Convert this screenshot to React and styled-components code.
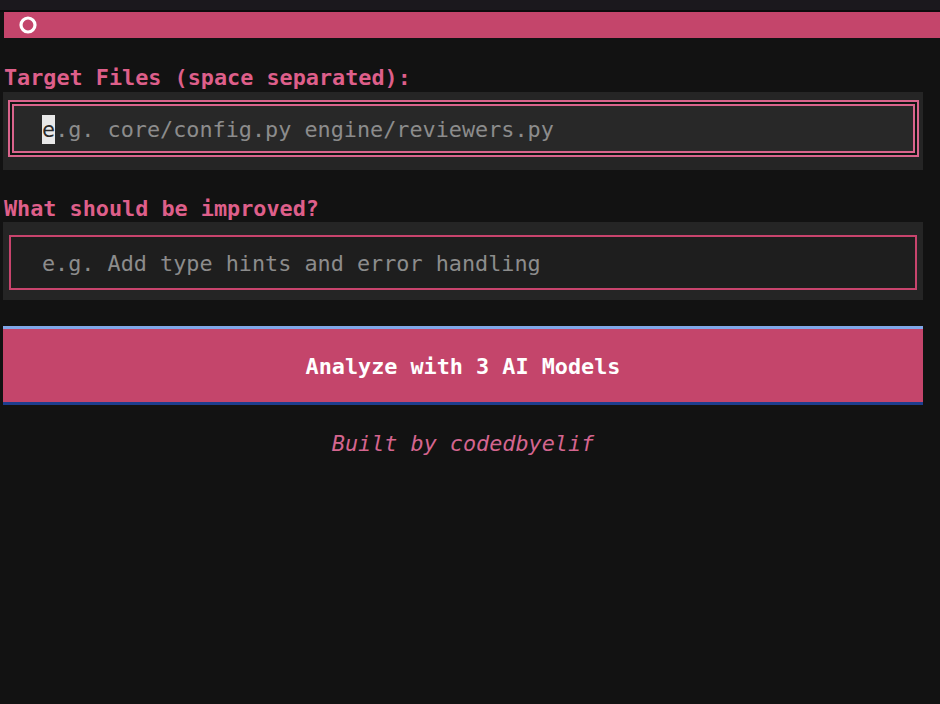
import React from "react";
import styled, { createGlobalStyle } from "styled-components";

const GlobalStyle = createGlobalStyle`
  html, body {
    margin: 0;
    padding: 0;
    background: #121212;
  }
  body {
    font-family: "DejaVu Sans Mono", "Liberation Mono", monospace;
  }
`;

const Screen = styled.div`
  width: 940px;
  height: 704px;
  background: #121212;
  overflow: hidden;
  font-size: 21.8px;
`;

const TopStrip = styled.div`
  height: 10px;
  background: #1b181d;
  border-bottom: 2px solid #0b0b0c;
`;

const Header = styled.div`
  height: 26px;
  margin-left: 4px;
  background: #c4456b;
  display: flex;
  align-items: center;
  padding-left: 14px;
`;

const Body = styled.div`
  display: flex;
  flex-direction: column;
  padding: 26px 17px 0 3px;
`;

const Label = styled.div`
  height: ${({ $h }) => $h || 26}px;
  line-height: ${({ $h }) => $h || 26}px;
  padding-left: 1px;
  color: #de5f8a;
  font-weight: bold;
  white-space: pre;
`;

const FieldBox = styled.div`
  height: 78px;
  box-sizing: border-box;
  background: #252525;
  padding: ${({ $focused }) => ($focused ? "8px 4px 13px 5px" : "13px 6px 10px 6px")};
  display: flex;
`;

const OuterFrame = styled.div`
  flex: 1;
  border: 2px solid #d9648c;
  padding: 2px;
  background: #0e1511;
  display: flex;
`;

const InnerField = styled.div`
  flex: 1;
  display: flex;
  align-items: center;
  background: ${({ $focused }) => ($focused ? "#282828" : "#1e1e1e")};
  border: ${({ $focused }) => ($focused ? "2px solid #d9648c" : "2.5px solid #c8446d")};
  padding-left: ${({ $focused }) => ($focused ? "28px" : "31px")};
  padding-top: 2px;
  white-space: pre;
  color: #8c8c8c;
`;

const Cursor = styled.span`
  background: #e8e8e8;
  color: #2a2a2a;
  padding: 2px 0;
`;

const Spacer = styled.div`
  height: 26px;
`;

const AnalyzeButton = styled.div`
  height: 79px;
  box-sizing: border-box;
  background: #c4456b;
  border-top: 3px solid #80a7e8;
  border-bottom: 3px solid #1d3d8d;
  display: flex;
  align-items: center;
  justify-content: center;
  padding-top: 2px;
  color: #ffffff;
  font-weight: bold;
  white-space: pre;
`;

const Footer = styled.div`
  height: 26px;
  line-height: 26px;
  text-align: center;
  color: #d4658f;
  font-style: italic;
  white-space: pre;
`;

const HeaderIcon = () => (
  <svg width="20" height="20" viewBox="0 0 20 20">
    <circle cx="10" cy="10" r="7" fill="none" stroke="#ffffff" strokeWidth="3.2" />
  </svg>
);

export default function App() {
  return (
    <>
      <GlobalStyle />
      <Screen>
        <TopStrip />
        <Header>
          <HeaderIcon />
        </Header>
        <Body>
          <Label $h={28}>Target Files (space separated):</Label>
          <FieldBox $focused>
            <OuterFrame>
              <InnerField $focused>
                <Cursor>e</Cursor>.g. core/config.py engine/reviewers.py
              </InnerField>
            </OuterFrame>
          </FieldBox>
          <Spacer />
          <Label>What should be improved?</Label>
          <FieldBox>
            <InnerField>e.g. Add type hints and error handling</InnerField>
          </FieldBox>
          <Spacer />
          <AnalyzeButton>Analyze with 3 AI Models</AnalyzeButton>
          <Spacer />
          <Footer>Built by codedbyelif</Footer>
        </Body>
      </Screen>
    </>
  );
}
